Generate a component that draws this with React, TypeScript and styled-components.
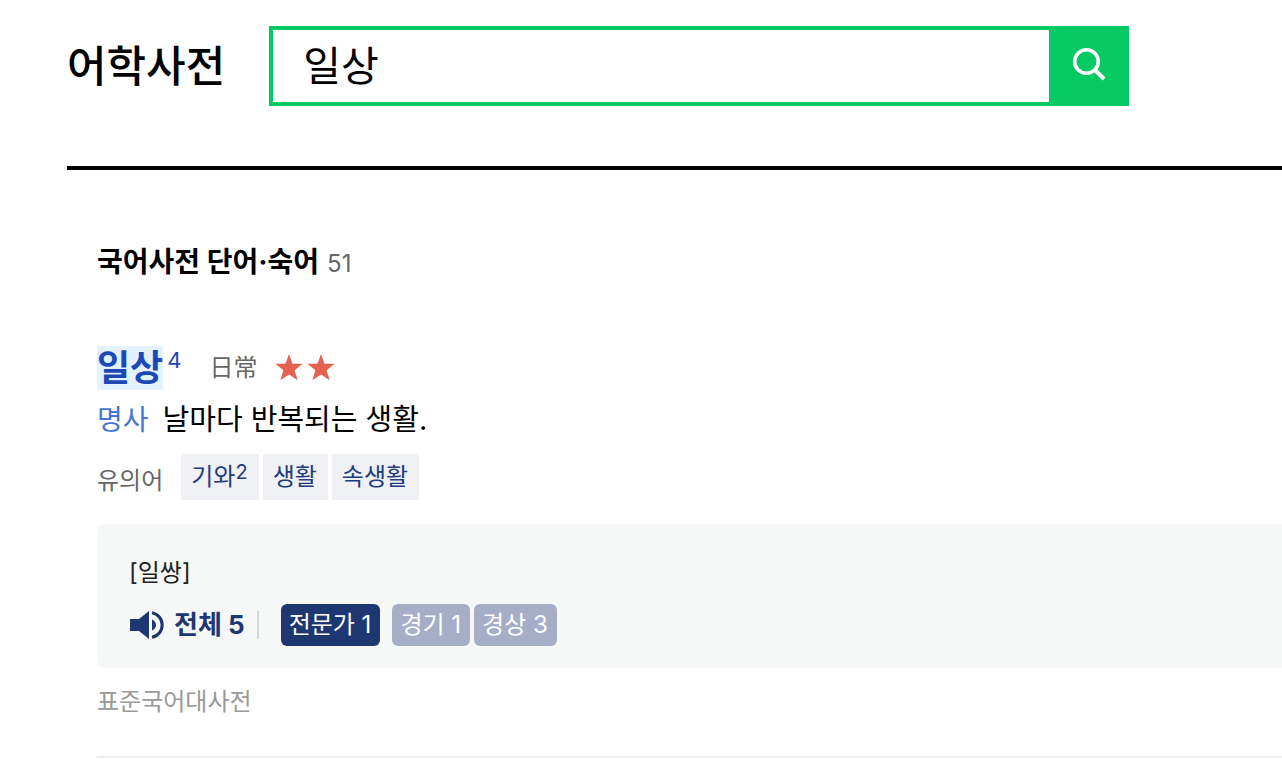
import React from "react";
import styled, { createGlobalStyle } from "styled-components";

const GlobalStyle = createGlobalStyle`
  * { box-sizing: border-box; }
  body {
    margin: 0;
    background: #fff;
    color: #000;
    font-family: Inter, "Noto Sans CJK KR", sans-serif;
    overflow-x: hidden;
  }
  button, input { font-family: inherit; }
  a { color: inherit; text-decoration: none; }
`;

const Page = styled.div`
  padding-left: 67px;
`;

const Header = styled.header`
  display: flex;
  align-items: center;
  gap: 44px;
  padding: 26px 152px 60px 0;
  border-bottom: 4px solid #000;
`;

const SiteTitle = styled.h1`
  margin: 0;
  font-size: 43px;
  line-height: 80px;
  font-weight: 500;
  white-space: nowrap;
`;

const SearchForm = styled.form`
  display: flex;
  flex: 1;
  max-width: 860px;
  height: 80px;
  border: 4px solid #05c963;
`;

const SearchInput = styled.input`
  flex: 1;
  min-width: 0;
  padding: 0 30px;
  border: 0;
  outline: 0;
  background: #fff;
  color: #000;
  font-size: 41px;
  line-height: 72px;
`;

const SearchButton = styled.button`
  display: flex;
  align-items: center;
  justify-content: center;
  width: 76px;
  padding: 0 0 4px 4px;
  border: 0;
  background: #05c963;
`;

const Main = styled.main`
  padding: 72px 0 0 30px;
`;

const SectionTitle = styled.h2`
  margin: 0 0 62px;
  font-size: 28px;
  line-height: 40px;
  font-weight: 700;
`;

const Count = styled.span`
  margin-left: 8px;
  color: #666;
  font-size: 24px;
  font-weight: 400;
`;

const Entry = styled.article`
  padding-bottom: 38px;
  border-bottom: 2px solid #eee;
`;

const WordRow = styled.div`
  display: flex;
  align-items: center;
  height: 44px;
`;

const WordLink = styled.a`
  display: flex;
  gap: 4px;
  color: #1c48b8;
`;

const Headword = styled.strong`
  background: #e2f3ff;
  font-size: 36px;
  line-height: 44px;
  font-weight: 700;
`;

const Homonym = styled.span`
  font-size: 22px;
  line-height: 28px;
`;

const Hanja = styled.span`
  margin: 0 18px 0 28px;
  color: #666;
  font-size: 24px;
  line-height: 44px;
`;

const Stars = styled.span`
  display: flex;
  gap: 4px;
`;

const Meaning = styled.p`
  display: flex;
  align-items: baseline;
  gap: 14px;
  margin: 8px 0 12px;
  line-height: 44px;
`;

const PartOfSpeech = styled.span`
  color: #4674d0;
  font-size: 28px;
`;

const Definition = styled.span`
  font-size: 29px;
`;

const Synonyms = styled.div`
  display: flex;
  align-items: center;
  gap: 4px;
`;

const SynonymLabel = styled.span`
  margin-right: 14px;
  padding-top: 8px;
  color: #666;
  font-size: 24px;
  line-height: 38px;
`;

const Tag = styled.a`
  display: flex;
  height: 46px;
  padding: 0 11px 0 10px;
  background: #f0f1f4;
  color: #223d7e;
  font-size: 24px;
  line-height: 46px;
`;

const TagIndex = styled.span`
  font-size: 20px;
  line-height: 36px;
`;

const Pronunciation = styled.section`
  margin-top: 24px;
  padding: 33px 32px 22px;
  border-radius: 8px 0 0 8px;
  background: #f6f8f7;
`;

const Phonetic = styled.p`
  margin: 0 0 15px;
  color: #222;
  font-size: 24px;
  line-height: 32px;
`;

const Speakers = styled.div`
  display: flex;
  align-items: center;
  height: 42px;
`;

const PlayAll = styled.button`
  display: flex;
  align-items: center;
  gap: 10px;
  padding: 0 0 0 1px;
  border: 0;
  background: none;
  color: #1f3770;
  font-size: 26px;
  line-height: 42px;
  font-weight: 700;
`;

const Separator = styled.span`
  width: 2px;
  height: 28px;
  margin: 0 22px 0 12px;
  background: #d5d7d7;
`;

const Pill = styled.button<{ $active?: boolean }>`
  height: 42px;
  margin-right: ${(p) => (p.$active ? 12 : 4)}px;
  padding: 0 9px 0 8px;
  border: 0;
  border-radius: 6px;
  background: ${(p) => (p.$active ? "#1f3770" : "#a6aec7")};
  color: #fff;
  font-size: 24px;
  line-height: 42px;
`;

const Source = styled.a`
  display: block;
  margin-top: 18px;
  color: #999;
  font-size: 24px;
  line-height: 32px;
`;

const SearchIcon = () => (
  <svg width="34" height="34" viewBox="0 0 34 34" fill="none" stroke="#fff" aria-hidden="true">
    <circle cx="14.5" cy="14.5" r="11.8" strokeWidth="3.6" />
    <path d="M23 23 32 32" strokeWidth="4" />
  </svg>
);

const StarIcon = () => (
  <svg width="28" height="28" viewBox="0 0 28 28" aria-hidden="true">
    <path
      d="M14 0 17.5 9.8H27.6L19.6 16.2 22.6 26.2 14 20.4 5.4 26.2 8.4 16.2.4 9.8H10.5Z"
      fill="#e4604f"
    />
  </svg>
);

const SpeakerIcon = () => (
  <svg width="34" height="28" viewBox="0 0 34 28" fill="#1f3770" aria-hidden="true">
    <path d="M0 8H9L19 0V28L9 20H0Z" />
    <path d="M22 8.5Q26 10.5 26 14T22 19.5Z" />
    <path d="M22 1.8A12.4 12.4 0 0 1 22 26.2" fill="none" stroke="#1f3770" strokeWidth="3.1" />
  </svg>
);

const synonyms = [
  { word: "기와", index: "2" },
  { word: "생활", index: "" },
  { word: "속생활", index: "" },
];

const speakers = ["전문가 1", "경기 1", "경상 3"];

export default function App() {
  return (
    <>
      <GlobalStyle />
      <Page>
        <Header>
          <SiteTitle>어학사전</SiteTitle>
          <SearchForm role="search" onSubmit={(e) => e.preventDefault()}>
            <SearchInput type="text" aria-label="검색어" defaultValue="일상" />
            <SearchButton type="submit" aria-label="검색">
              <SearchIcon />
            </SearchButton>
          </SearchForm>
        </Header>
        <Main>
          <SectionTitle>
            국어사전 단어·숙어<Count>51</Count>
          </SectionTitle>
          <Entry>
            <WordRow>
              <WordLink href="#entry">
                <Headword>일상</Headword>
                <Homonym>4</Homonym>
              </WordLink>
              <Hanja lang="ja">日常</Hanja>
              <Stars role="img" aria-label="중요도 2">
                <StarIcon />
                <StarIcon />
              </Stars>
            </WordRow>
            <Meaning>
              <PartOfSpeech>명사</PartOfSpeech>
              <Definition>날마다 반복되는 생활.</Definition>
            </Meaning>
            <Synonyms>
              <SynonymLabel>유의어</SynonymLabel>
              {synonyms.map((s) => (
                <Tag key={s.word} href="#synonym">
                  {s.word}
                  {s.index && <TagIndex>{s.index}</TagIndex>}
                </Tag>
              ))}
            </Synonyms>
            <Pronunciation aria-label="발음">
              <Phonetic>[일쌍]</Phonetic>
              <Speakers>
                <PlayAll type="button">
                  <SpeakerIcon />
                  전체 5
                </PlayAll>
                <Separator />
                {speakers.map((name, i) => (
                  <Pill key={name} type="button" $active={i === 0}>
                    {name}
                  </Pill>
                ))}
              </Speakers>
            </Pronunciation>
            <Source href="#source">표준국어대사전</Source>
          </Entry>
        </Main>
      </Page>
    </>
  );
}
